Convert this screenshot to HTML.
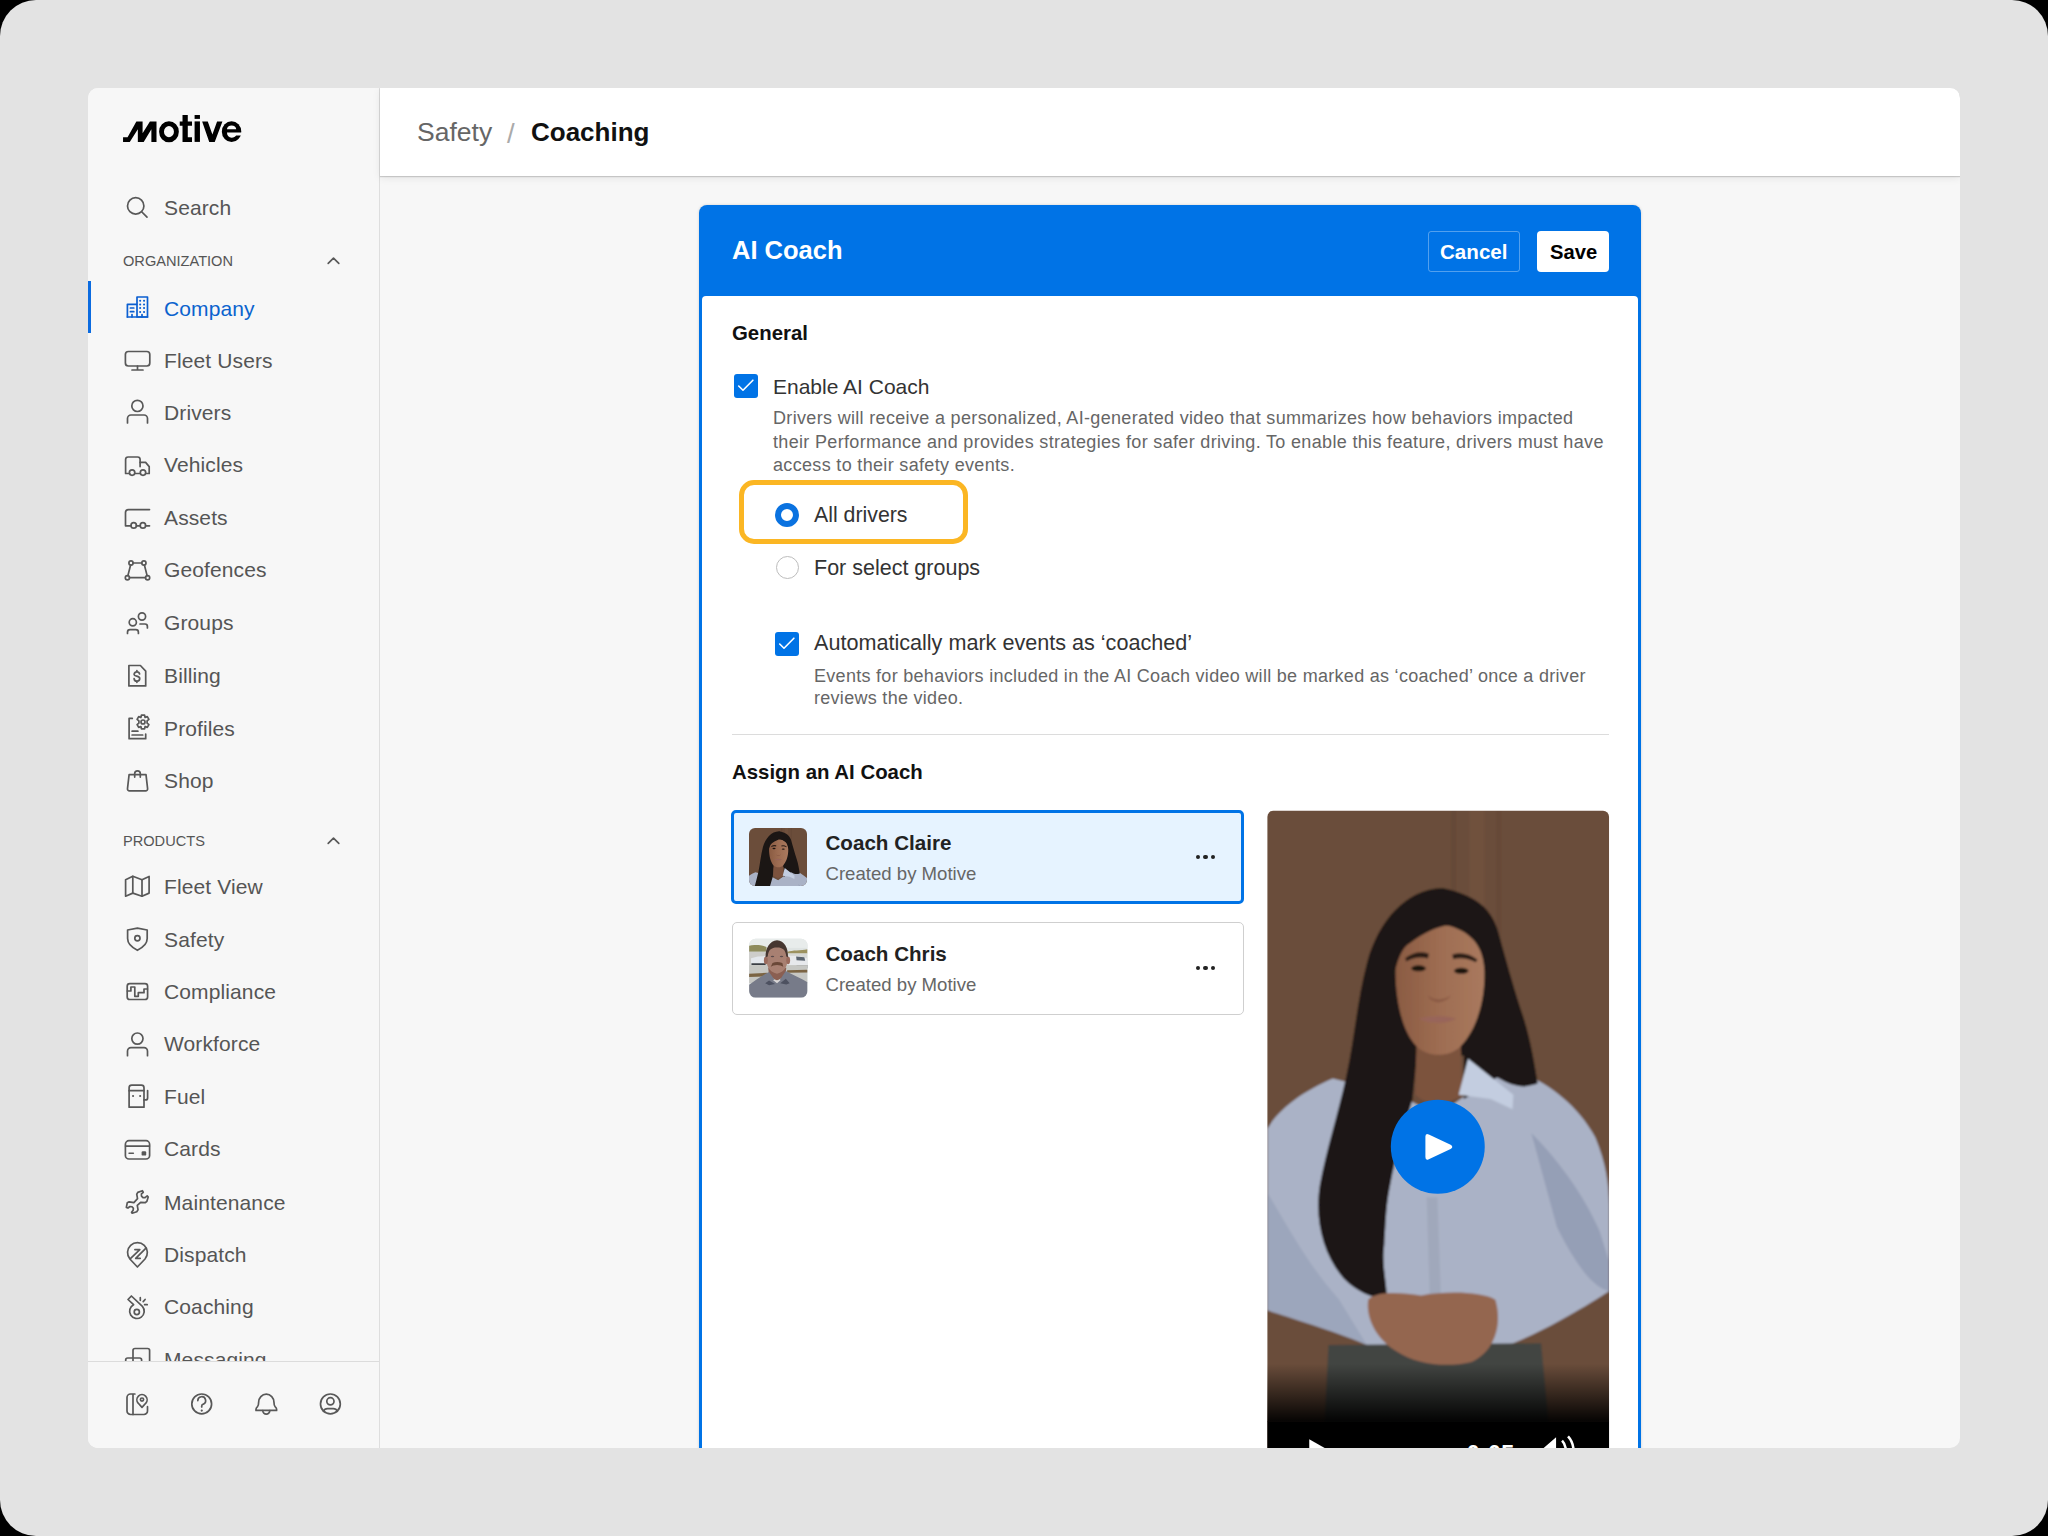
<!DOCTYPE html>
<html><head><meta charset="utf-8">
<style>
*{box-sizing:border-box;margin:0;padding:0}
html,body{width:2048px;height:1536px;overflow:hidden;background:#000;font-family:"Liberation Sans",sans-serif}
.abs{position:absolute;white-space:nowrap}
#frame{position:absolute;left:0;top:0;width:2048px;height:1536px;background:#e3e3e3;border-radius:36px;overflow:hidden}
#win{position:absolute;left:0;top:0;width:2048px;height:1536px;clip-path:inset(88px 88px 88px 88px round 10px);background:#f7f7f7}
</style></head><body>
<div id="frame"><div id="win">

<div class="abs" style="left:88px;top:88px;width:291px;height:1360px;background:#f7f7f7"></div>
<div class="abs" style="left:379px;top:88px;width:1px;height:1360px;background:#dedede"></div>
<svg class="abs" style="left:110px;top:100px" width="150" height="60" viewBox="0 0 2048 819">
<g fill="#000">
<path d="M178 510 L240 510 L360 292 L445 292 L445 455 L545 292 L635 292 L635 572 L565 572 L565 400 L460 572 L380 572 L380 400 L270 572 L178 572 Z"/>
<path fill-rule="evenodd" d="M805 290 A135 143 0 1 1 805 576 A135 143 0 1 1 805 290 Z M805 356 A68 76 0 1 0 805 508 A68 76 0 1 0 805 356 Z"/>
<path d="M990 205 H1062 V292 H1120 V352 H1062 V510 H1120 V572 H990 V352 H952 V292 H990 Z"/>
<rect x="1155" y="205" width="73" height="53"/>
<rect x="1155" y="292" width="73" height="280"/>
<path d="M1258 292 L1335 292 L1398 470 L1462 292 L1535 292 L1430 572 L1355 572 Z"/>
<ellipse cx="1660" cy="432" rx="133" ry="143"/><path fill="#f7f7f7" d="M1597 400 A63 52 0 0 1 1723 400 Z"/><path fill="#f7f7f7" d="M1597 445 C1597 490 1625 515 1660 515 C1690 515 1712 500 1722 485 H1810 V445 Z"/>
</g>
</svg>

<div class="abs" style="left:164px;top:196.00px;font-size:21px;line-height:23.46px;color:#555;font-weight:normal;letter-spacing:0.12px;">Search</div>
<div class="abs" style="left:164px;top:296.50px;font-size:21px;line-height:23.46px;color:#0b63ce;font-weight:normal;letter-spacing:0.12px;">Company</div>
<div class="abs" style="left:164px;top:349.00px;font-size:21px;line-height:23.46px;color:#555;font-weight:normal;letter-spacing:0.12px;">Fleet Users</div>
<div class="abs" style="left:164px;top:401.00px;font-size:21px;line-height:23.46px;color:#555;font-weight:normal;letter-spacing:0.12px;">Drivers</div>
<div class="abs" style="left:164px;top:453.19px;font-size:21px;line-height:23.46px;color:#555;font-weight:normal;letter-spacing:0.12px;">Vehicles</div>
<div class="abs" style="left:164px;top:505.50px;font-size:21px;line-height:23.46px;color:#555;font-weight:normal;letter-spacing:0.12px;">Assets</div>
<div class="abs" style="left:164px;top:558.29px;font-size:21px;line-height:23.46px;color:#555;font-weight:normal;letter-spacing:0.12px;">Geofences</div>
<div class="abs" style="left:164px;top:611.00px;font-size:21px;line-height:23.46px;color:#555;font-weight:normal;letter-spacing:0.12px;">Groups</div>
<div class="abs" style="left:164px;top:664.39px;font-size:21px;line-height:23.46px;color:#555;font-weight:normal;letter-spacing:0.12px;">Billing</div>
<div class="abs" style="left:164px;top:716.70px;font-size:21px;line-height:23.46px;color:#555;font-weight:normal;letter-spacing:0.12px;">Profiles</div>
<div class="abs" style="left:164px;top:769.39px;font-size:21px;line-height:23.46px;color:#555;font-weight:normal;letter-spacing:0.12px;">Shop</div>
<div class="abs" style="left:164px;top:875.00px;font-size:21px;line-height:23.46px;color:#555;font-weight:normal;letter-spacing:0.12px;">Fleet View</div>
<div class="abs" style="left:164px;top:927.50px;font-size:21px;line-height:23.46px;color:#555;font-weight:normal;letter-spacing:0.12px;">Safety</div>
<div class="abs" style="left:164px;top:979.60px;font-size:21px;line-height:23.46px;color:#555;font-weight:normal;letter-spacing:0.12px;">Compliance</div>
<div class="abs" style="left:164px;top:1032.39px;font-size:21px;line-height:23.46px;color:#555;font-weight:normal;letter-spacing:0.12px;">Workforce</div>
<div class="abs" style="left:164px;top:1084.99px;font-size:21px;line-height:23.46px;color:#555;font-weight:normal;letter-spacing:0.12px;">Fuel</div>
<div class="abs" style="left:164px;top:1136.99px;font-size:21px;line-height:23.46px;color:#555;font-weight:normal;letter-spacing:0.12px;">Cards</div>
<div class="abs" style="left:164px;top:1190.99px;font-size:21px;line-height:23.46px;color:#555;font-weight:normal;letter-spacing:0.12px;">Maintenance</div>
<div class="abs" style="left:164px;top:1243.19px;font-size:21px;line-height:23.46px;color:#555;font-weight:normal;letter-spacing:0.12px;">Dispatch</div>
<div class="abs" style="left:164px;top:1295.49px;font-size:21px;line-height:23.46px;color:#555;font-weight:normal;letter-spacing:0.12px;">Coaching</div>
<div class="abs" style="left:164px;top:1347.99px;font-size:21px;line-height:23.46px;color:#555;font-weight:normal;letter-spacing:0.12px;">Messaging</div>
<div class="abs" style="left:123px;top:253.29px;font-size:14.6px;line-height:16.31px;color:#555;font-weight:normal;letter-spacing:0px;">ORGANIZATION</div>
<div class="abs" style="left:123px;top:832.79px;font-size:14.6px;line-height:16.31px;color:#555;font-weight:normal;letter-spacing:0px;">PRODUCTS</div>
<div class="abs" style="left:88px;top:281px;width:3px;height:52px;background:#0b6be0"></div>
<svg class="abs" style="left:0;top:0" width="400" height="1536" viewBox="0 0 400 1536" fill="none" stroke="#585858" stroke-width="1.7" stroke-linecap="round" stroke-linejoin="round">
<!-- search -->
<circle cx="135.7" cy="205.9" r="8.2"/>
<path d="M141.9 212 L147 217.2"/>
<!-- chevrons -->
<path d="M328.2 263.4 L333.5 258.2 L338.8 263.4"/>
<path d="M328.2 843.4 L333.5 838.2 L338.8 843.4"/>
<!-- company (blue) -->
<g stroke="#0b5fd1">
<path d="M137 317 V297 H147.5 V317 Z"/>
<path d="M127.4 317 V304.3 H136.5"/>
<path d="M127.4 317 H147.5"/>
<path d="M130.4 308 H133.8 M130.4 311.7 H133.8"/>
<path d="M140.1 300.7 h0.1 M144 300.7 h0.1 M140.1 304.5 h0.1 M144 304.5 h0.1 M140.1 308.1 h0.1 M144 308.1 h0.1 M140.1 311.9 h0.1 M144 311.9 h0.1" stroke-width="2"/>
<path d="M132 314.6 V317 M142 314.6 V317"/>
</g>
<!-- fleet users monitor -->
<rect x="125.4" y="351.5" width="24.4" height="14.5" rx="3"/>
<path d="M137.5 366.2 V370 M132 370 H143"/>
<!-- drivers -->
<circle cx="137.4" cy="405.9" r="5.6"/>
<path d="M127.5 423 V418.5 a3.5 3.5 0 0 1 3.5 -3.5 H144 a3.5 3.5 0 0 1 3.5 3.5 V423"/>
<!-- vehicles -->
<path d="M129.6 473.5 H125.6 V459.5 a2.5 2.5 0 0 1 2.5 -2.5 H137.6 a2.5 2.5 0 0 1 2.5 2.5 V466.6"/>
<path d="M140.1 462.4 H145.6 L149.2 466.6 V473.5 H145.7"/>
<path d="M134.8 473.5 H140.3"/>
<circle cx="132.1" cy="472.6" r="2.7"/>
<circle cx="143" cy="472.6" r="2.7"/>
<!-- assets -->
<path d="M149.5 509.6 H128.5 a3 3 0 0 0 -3 3 V525.8 H131"/>
<path d="M136.4 525.8 H140.3 M145.6 525.8 H149.5"/>
<circle cx="133.7" cy="525.4" r="2.7"/>
<circle cx="142.9" cy="525.4" r="2.7"/>
<!-- geofences -->
<circle cx="131" cy="563" r="2.1"/>
<circle cx="143.9" cy="563" r="2.1"/>
<circle cx="127.4" cy="577.7" r="2.1"/>
<circle cx="147.6" cy="577.7" r="2.1"/>
<path d="M133.1 563 H141.8 M129.5 577.7 H145.5 M130.6 565 L127.9 575.6 M144.4 565 L147.1 575.6"/>
<!-- groups -->
<circle cx="132.8" cy="622.3" r="3.6"/>
<circle cx="142" cy="616.5" r="3.6"/>
<path d="M127.5 633.5 V632.2 a2.5 2.5 0 0 1 2.5 -2.5 H135.9 a2.5 2.5 0 0 1 2.5 2.5 V633.5"/>
<path d="M140 624 H145 a2.4 2.4 0 0 1 2.4 2.4 V628"/>
<!-- billing -->
<path d="M128.9 665.5 H140.4 L145.7 671.1 V685.9 H128.9 Z"/>
<path d="M139.6 674 a2.8 2.8 0 0 0 -5.5 0.4 c0 2 5.6 1.4 5.6 3.8 a2.8 2.8 0 0 1 -5.6 0.4 M136.9 670.6 V671.5 M136.9 681.4 V682.3"/>
<!-- profiles -->
<path d="M132.3 718.4 H129.1 V738.7 H145.7 V734"/>
<path d="M132.1 731.2 H137.9 M132.1 735 H142.7"/>
<path d="M141.4 715.2 H144.6 L145.1 717.5 L147.3 716.6 L148.9 719.4 L147.1 720.9 V723.1 L148.9 724.6 L147.3 727.4 L145.1 726.5 L144.6 728.8 H141.4 L140.9 726.5 L138.7 727.4 L137.1 724.6 L138.9 723.1 V720.9 L137.1 719.4 L138.7 716.6 L140.9 717.5 Z"/>
<circle cx="143" cy="722" r="2"/>
<!-- shop -->
<path d="M129.1 774.7 H146 L147.6 788.6 a2 2 0 0 1 -2 2.3 H129.5 a2 2 0 0 1 -2 -2.3 Z"/>
<path d="M134.7 777.1 V773.6 a2.8 2.8 0 0 1 5.6 0 V777.1"/>
<!-- fleet view -->
<path d="M125.6 879.8 L132.8 876.3 L142 879.8 L149.1 876.4 V893.1 L142 896.2 L132.8 893.1 L125.6 896.2 Z"/>
<path d="M132.8 876.3 V893.1 M142 879.8 V896.2"/>
<!-- safety -->
<path d="M137.4 928.2 L127.6 930 V938.6 C127.6 943.6 131.5 947.4 137.4 950.3 C143.3 947.4 147.2 943.6 147.2 938.6 V930 Z"/>
<circle cx="137.4" cy="938.3" r="2.6"/>
<!-- compliance -->
<rect x="127.2" y="983.6" width="20.4" height="15.9" rx="2.6"/>
<path d="M127.4 991 H130.9 V987 H134.8 V996.3 H138.3 V992.7 H144 V989 H147.4"/>
<!-- workforce -->
<circle cx="137.4" cy="1038.6" r="5.6"/>
<path d="M127.5 1055.7 V1051.2 a3.5 3.5 0 0 1 3.5 -3.5 H144 a3.5 3.5 0 0 1 3.5 3.5 V1055.7"/>
<!-- fuel -->
<path d="M129.1 1107.2 V1087.8 a2.6 2.6 0 0 1 2.6 -2.6 H141.4 a2.6 2.6 0 0 1 2.6 2.6 V1107.2 Z"/>
<path d="M129.1 1090.7 H144"/>
<path d="M133 1096 h0.1 M140.1 1096 h0.1" stroke-width="2"/>
<path d="M144 1099.9 H145.6 a2 2 0 0 0 2 -2 V1090.5"/>
<!-- cards -->
<rect x="125.4" y="1140.7" width="24.2" height="18.3" rx="3.6"/>
<path d="M125.6 1146.1 H149.4"/>
<path d="M129 1153.3 H133.4" stroke-width="1.4"/>
<rect x="141.6" y="1151.2" width="4.6" height="4.4" rx="1.2" fill="#585858" stroke="none"/>
<!-- maintenance -->
<path transform="translate(118 1182) scale(0.02604)" stroke-width="65" d="M935 335 L760 400 L720 470 L750 640 L610 790 L430 760 L355 800 L320 980 L380 1000 L460 940 L540 950 L590 1010 L580 1090 L520 1160 L545 1200 L720 1140 L770 1070 L740 900 L870 780 L1050 790 L1110 740 L1160 580 L1120 530 L1040 600 L960 600 L900 540 L900 460 L970 395 Z"/>
<!-- dispatch -->
<path d="M129.9 1259 A9.9 9.9 0 1 1 145 1259 L137.4 1267 Z"/>
<path d="M134.9 1249.6 H139.8 L130.4 1258.6 M146 1248.2 L135.7 1258.3 H140.2"/>
<!-- coaching -->
<path d="M133.6 1304.7 L128 1299.5 L131.4 1296 L142.4 1306.4 A7.3 7.3 0 1 1 133.6 1304.7 Z"/>
<circle cx="136.8" cy="1312" r="2.6"/>
<path d="M140.3 1297.7 V1300.3 M143.2 1301.6 L145.1 1299.5 M144.6 1304.7 H147.2"/>
<!-- messaging (clipped) -->
<path d="M133 1365 V1350.5 a2 2 0 0 1 2 -2 H147.6 a2 2 0 0 1 2 2 V1365"/>
<path d="M125.7 1365 V1360 a2 2 0 0 1 2 -2 H139.6 a2 2 0 0 1 2 2 V1365"/>
</svg>

<div class="abs" style="left:88px;top:1361px;width:291px;height:87px;background:#f7f7f7;border-top:1px solid #dcdcdc"></div>
<svg class="abs" style="left:0;top:1370px" width="400" height="70" viewBox="0 1370 400 70" fill="none" stroke="#585858" stroke-width="1.7" stroke-linecap="round" stroke-linejoin="round">
<path d="M134.9 1394 H130.5 a3.5 3.5 0 0 0 -3.5 3.5 V1411 a3.5 3.5 0 0 0 3.5 3.5 H144 a3.5 3.5 0 0 0 3.5 -3.5 V1406.7"/>
<path d="M133 1394.5 V1414.5"/>
<path d="M138.3 1403.3 A5.1 5.1 0 1 1 145.7 1403.3 L142 1407.4 Z"/>
<circle cx="142" cy="1399.6" r="1.6"/>
<circle cx="201.7" cy="1403.9" r="9.9"/>
<path d="M197.8 1400.6 a3.9 3.9 0 1 1 5.5 3.6 a2 2 0 0 0 -1.6 1.9 V1407"/>
<path d="M201.7 1410.6 h0.1" stroke-width="2.1"/>
<path d="M256 1410.4 V1409.2 Q256 1408 257.5 1406.6 Q258.6 1405.5 258.6 1402.5 A7.7 8.3 0 0 1 274 1402.5 Q274 1405.5 275.1 1406.6 Q276.6 1408 276.6 1409.2 V1410.4 Z"/>
<path d="M262.8 1410.6 a3.5 3.5 0 0 0 7 0"/>
<circle cx="330.4" cy="1403.9" r="9.9"/>
<circle cx="330.4" cy="1401.3" r="3.6"/>
<path d="M323.4 1411.3 Q324.6 1408.6 327.5 1408.6 H333.3 Q336.2 1408.6 337.4 1411.3"/>
</svg>

<div class="abs" style="left:380px;top:88px;width:1580px;height:88px;background:#fff;box-shadow:0 1px 1px rgba(0,0,0,.16),0 2px 8px rgba(0,0,0,.08)"></div>
<div class="abs" style="left:417px;top:118.02px;font-size:26.5px;line-height:29.60px;color:#666;font-weight:normal;letter-spacing:0px;">Safety</div>
<div class="abs" style="left:507px;top:118.61px;font-size:27.5px;line-height:30.72px;color:#aaa;font-weight:normal;letter-spacing:0px;">/</div>
<div class="abs" style="left:531px;top:118.47px;font-size:26px;line-height:29.04px;color:#111;font-weight:bold;letter-spacing:0px;">Coaching</div>
<div class="abs" style="left:699px;top:205px;width:942px;height:1300px;background:#0073e6;border-radius:8px;box-shadow:0 0 3px rgba(0,0,0,.16)"></div>
<div class="abs" style="left:732px;top:235.92px;font-size:25.5px;line-height:28.48px;color:#fff;font-weight:bold;letter-spacing:0px;">AI Coach</div>
<div class="abs" style="left:1428px;top:231px;width:92px;height:41px;border:1px solid rgba(255,255,255,.32);border-radius:3px"></div>
<div class="abs" style="left:1440px;top:240.36px;font-size:20.6px;line-height:23.01px;color:#fff;font-weight:bold;letter-spacing:0px;">Cancel</div>
<div class="abs" style="left:1537px;top:231px;width:72px;height:41px;background:#fff;border-radius:4px"></div>
<div class="abs" style="left:1550px;top:240.72px;font-size:20.2px;line-height:22.56px;color:#000;font-weight:bold;letter-spacing:0px;">Save</div>
<div class="abs" style="left:702px;top:296px;width:936px;height:1200px;background:#fff;border-radius:4px 4px 0 0"></div>
<div class="abs" style="left:732px;top:322.04px;font-size:20.4px;line-height:22.79px;color:#111;font-weight:bold;letter-spacing:0px;">General</div>
<div class="abs" style="left:734px;top:374px;width:24px;height:24px;background:#0073e6;border-radius:3px"><svg width="24" height="24" viewBox="0 0 24 24" style="position:absolute;left:0;top:0"><path d="M4.7 12 L9 16.2 L18.9 6.2" fill="none" stroke="#fff" stroke-width="1.6" stroke-linecap="round" stroke-linejoin="round"/></svg></div>
<div class="abs" style="left:773px;top:375.00px;font-size:21px;line-height:23.46px;color:#333;font-weight:normal;letter-spacing:0px;">Enable AI Coach</div>
<div class="abs" style="left:773px;top:408.21px;font-size:18px;line-height:20.11px;color:#666;font-weight:normal;letter-spacing:0.33px;">Drivers will receive a personalized, AI-generated video that summarizes how behaviors impacted</div>
<div class="abs" style="left:773px;top:431.51px;font-size:18px;line-height:20.11px;color:#666;font-weight:normal;letter-spacing:0.33px;">their Performance and provides strategies for safer driving. To enable this feature, drivers must have</div>
<div class="abs" style="left:773px;top:454.51px;font-size:18px;line-height:20.11px;color:#666;font-weight:normal;letter-spacing:0.33px;">access to their safety events.</div>
<div class="abs" style="left:739px;top:480px;width:229px;height:64px;border:5px solid #fbb623;border-radius:15px"></div>
<div class="abs" style="left:775px;top:503px;width:24px;height:24px;border-radius:50%;border:6px solid #0a72e0;background:#fff"></div>
<div class="abs" style="left:814px;top:504.22px;font-size:21.3px;line-height:23.79px;color:#333;font-weight:normal;letter-spacing:0px;">All drivers</div>
<div class="abs" style="left:775.5px;top:556px;width:23px;height:23px;border-radius:50%;border:1.5px solid #bdbdbd;background:#fff"></div>
<div class="abs" style="left:814px;top:556.34px;font-size:21.5px;line-height:24.02px;color:#333;font-weight:normal;letter-spacing:0px;">For select groups</div>
<div class="abs" style="left:775px;top:632px;width:24px;height:24px;background:#0073e6;border-radius:3px"><svg width="24" height="24" viewBox="0 0 24 24" style="position:absolute;left:0;top:0"><path d="M4.7 12 L9 16.2 L18.9 6.2" fill="none" stroke="#fff" stroke-width="1.6" stroke-linecap="round" stroke-linejoin="round"/></svg></div>
<div class="abs" style="left:814px;top:631.05px;font-size:21.6px;line-height:24.13px;color:#333;font-weight:normal;letter-spacing:0px;">Automatically mark events as ‘coached’</div>
<div class="abs" style="left:814px;top:665.61px;font-size:18px;line-height:20.11px;color:#666;font-weight:normal;letter-spacing:0.29px;">Events for behaviors included in the AI Coach video will be marked as ‘coached’ once a driver</div>
<div class="abs" style="left:814px;top:688.41px;font-size:18px;line-height:20.11px;color:#666;font-weight:normal;letter-spacing:0.29px;">reviews the video.</div>
<div class="abs" style="left:732px;top:734px;width:877px;height:1px;background:#dcdcdc"></div>
<div class="abs" style="left:732px;top:761.14px;font-size:20.4px;line-height:22.79px;color:#111;font-weight:bold;letter-spacing:0px;">Assign an AI Coach</div>
<div class="abs" style="left:731px;top:810px;width:513px;height:94px;background:#e6f3ff;border:3px solid #0073e6;border-radius:5px"></div>
<div class="abs" style="left:731.5px;top:921.5px;width:512px;height:93px;background:#fff;border:1.5px solid #cfcfcf;border-radius:5px"></div>
<div class="abs" style="left:825.5px;top:831.36px;font-size:20.6px;line-height:23.01px;color:#222;font-weight:bold;letter-spacing:0px;">Coach Claire</div>
<div class="abs" style="left:825.5px;top:864.17px;font-size:18.6px;line-height:20.78px;color:#666;font-weight:normal;letter-spacing:0px;">Created by Motive</div>
<div class="abs" style="left:825.5px;top:942.36px;font-size:20.6px;line-height:23.01px;color:#222;font-weight:bold;letter-spacing:0px;">Coach Chris</div>
<div class="abs" style="left:825.5px;top:975.17px;font-size:18.6px;line-height:20.78px;color:#666;font-weight:normal;letter-spacing:0px;">Created by Motive</div>
<div class="abs" style="left:1195.8px;top:854.8px;width:4.4px;height:4.4px;border-radius:50%;background:#222"></div>
<div class="abs" style="left:1203.3px;top:854.8px;width:4.4px;height:4.4px;border-radius:50%;background:#222"></div>
<div class="abs" style="left:1210.8px;top:854.8px;width:4.4px;height:4.4px;border-radius:50%;background:#222"></div>
<div class="abs" style="left:1195.8px;top:965.8px;width:4.4px;height:4.4px;border-radius:50%;background:#222"></div>
<div class="abs" style="left:1203.3px;top:965.8px;width:4.4px;height:4.4px;border-radius:50%;background:#222"></div>
<div class="abs" style="left:1210.8px;top:965.8px;width:4.4px;height:4.4px;border-radius:50%;background:#222"></div>
<svg class="abs" style="left:1258px;top:800px" width="360" height="656" viewBox="0 0 843 1536"><defs><clipPath id="vclip"><rect x="22" y="25" width="800" height="1600" rx="14"/></clipPath><linearGradient id="skin" x1="0" y1="0" x2="1" y2="0"><stop offset="0" stop-color="#8a5b42"/><stop offset=".5" stop-color="#9e6d52"/><stop offset="1" stop-color="#a9795e"/></linearGradient><linearGradient id="vgrad" x1="0" y1="0" x2="0" y2="1"><stop offset="0" stop-color="#000" stop-opacity="0"/><stop offset="1" stop-color="#000" stop-opacity=".95"/></linearGradient><filter id="soft" x="-5%" y="-5%" width="110%" height="110%"><feGaussianBlur stdDeviation="2.2"/></filter><symbol id="claire" viewBox="0 0 843 1536">
<rect x="0" y="0" width="843" height="1536" fill="#6b4d3a"/>
<rect x="452" y="0" width="12" height="1536" fill="#5f4334" opacity=".5"/>
<rect x="495" y="0" width="35" height="1536" fill="#785742" opacity=".45"/>
<rect x="558" y="0" width="12" height="1536" fill="#5f4334" opacity=".4"/>
<path fill="#aab2c6" d="M22 770 C50 720 110 680 175 652 L330 690 L420 738 L500 682 L572 620 C660 650 740 700 790 790 C815 850 822 900 822 950 L822 1150 C760 1190 660 1250 575 1280 L255 1276 C170 1240 80 1215 22 1195 Z"/>
<path fill="#8793ab" opacity=".6" d="M640 780 C700 840 760 920 800 1010 L822 1080 L822 1150 C780 1140 740 1080 700 1000 Z"/>
<path fill="#8e9ab1" opacity=".5" d="M22 920 C60 980 110 1080 190 1170 L255 1276 C170 1240 80 1215 22 1195 Z"/>
<path fill="#959eb0" opacity=".5" d="M395 930 L420 930 L432 1260 L405 1260 Z"/>
<path fill="#1b1614" d="M432 206 C345 208 282 285 256 378 C232 466 226 560 206 650 C186 740 160 820 145 900 C132 980 150 1060 200 1120 C240 1160 280 1170 302 1164 C300 1120 290 1090 296 1040 C300 980 300 950 310 900 C322 830 345 760 362 700 L372 600 L482 598 L482 700 C520 680 540 660 560 650 C600 672 620 676 655 664 C648 620 638 560 622 510 C600 445 580 370 560 300 C545 260 520 225 432 206 Z"/>
<path fill="#7c523d" d="M372 540 L368 690 Q420 735 478 690 L474 540 Z"/>
<path fill="url(#skin)" d="M425 290 C485 300 528 330 530 400 C532 475 510 540 474 577 C450 602 398 604 372 577 C340 547 322 475 322 400 C322 330 365 300 425 290 Z"/>
<path fill="#c3cde0" d="M492 606 L598 690 L596 724 L545 700 L470 690 Z"/>
<path fill="#1b1614" d="M432 212 C380 225 330 275 318 340 L316 420 C325 380 335 345 357 334 C390 310 420 295 448 293 C480 300 500 315 514 334 C525 350 530 380 534 405 L530 330 C515 270 475 225 432 212 Z"/>
<path fill="#2a1c17" d="M345 370 Q372 350 400 360 L398 371 Q372 364 347 378 Z M455 362 Q485 352 514 374 L510 380 Q482 366 457 373 Z"/>
<ellipse cx="376" cy="394" rx="17" ry="7" fill="#1e1410"/>
<ellipse cx="476" cy="400" rx="17" ry="7" fill="#1e1410"/>
<path fill="#8a5a45" d="M398 458 Q422 476 452 458 Q442 472 422 474 Q402 472 398 458 Z"/>
<path fill="#98655a" d="M375 512 Q422 500 465 512 Q422 532 375 512 Z"/>
<path fill="#424542" d="M165 1276 L663 1272 L688 1536 L152 1536 Z"/>
<path fill="#946650" d="M258 1170 C275 1150 332 1152 382 1160 C442 1150 520 1150 556 1170 C574 1232 552 1292 500 1316 C440 1330 372 1322 326 1292 C276 1262 252 1212 258 1170 Z"/>
</symbol></defs><g clip-path="url(#vclip)"><g filter="url(#soft)">
<rect x="0" y="0" width="843" height="1536" fill="#6b4d3a"/>
<rect x="452" y="0" width="12" height="1536" fill="#5f4334" opacity=".5"/>
<rect x="495" y="0" width="35" height="1536" fill="#785742" opacity=".45"/>
<rect x="558" y="0" width="12" height="1536" fill="#5f4334" opacity=".4"/>
<path fill="#aab2c6" d="M22 770 C50 720 110 680 175 652 L330 690 L420 738 L500 682 L572 620 C660 650 740 700 790 790 C815 850 822 900 822 950 L822 1150 C760 1190 660 1250 575 1280 L255 1276 C170 1240 80 1215 22 1195 Z"/>
<path fill="#8793ab" opacity=".6" d="M640 780 C700 840 760 920 800 1010 L822 1080 L822 1150 C780 1140 740 1080 700 1000 Z"/>
<path fill="#8e9ab1" opacity=".5" d="M22 920 C60 980 110 1080 190 1170 L255 1276 C170 1240 80 1215 22 1195 Z"/>
<path fill="#959eb0" opacity=".5" d="M395 930 L420 930 L432 1260 L405 1260 Z"/>
<path fill="#1b1614" d="M432 206 C345 208 282 285 256 378 C232 466 226 560 206 650 C186 740 160 820 145 900 C132 980 150 1060 200 1120 C240 1160 280 1170 302 1164 C300 1120 290 1090 296 1040 C300 980 300 950 310 900 C322 830 345 760 362 700 L372 600 L482 598 L482 700 C520 680 540 660 560 650 C600 672 620 676 655 664 C648 620 638 560 622 510 C600 445 580 370 560 300 C545 260 520 225 432 206 Z"/>
<path fill="#7c523d" d="M372 540 L368 690 Q420 735 478 690 L474 540 Z"/>
<path fill="url(#skin)" d="M425 290 C485 300 528 330 530 400 C532 475 510 540 474 577 C450 602 398 604 372 577 C340 547 322 475 322 400 C322 330 365 300 425 290 Z"/>
<path fill="#c3cde0" d="M492 606 L598 690 L596 724 L545 700 L470 690 Z"/>
<path fill="#1b1614" d="M432 212 C380 225 330 275 318 340 L316 420 C325 380 335 345 357 334 C390 310 420 295 448 293 C480 300 500 315 514 334 C525 350 530 380 534 405 L530 330 C515 270 475 225 432 212 Z"/>
<path fill="#2a1c17" d="M345 370 Q372 350 400 360 L398 371 Q372 364 347 378 Z M455 362 Q485 352 514 374 L510 380 Q482 366 457 373 Z"/>
<ellipse cx="376" cy="394" rx="17" ry="7" fill="#1e1410"/>
<ellipse cx="476" cy="400" rx="17" ry="7" fill="#1e1410"/>
<path fill="#8a5a45" d="M398 458 Q422 476 452 458 Q442 472 422 474 Q402 472 398 458 Z"/>
<path fill="#98655a" d="M375 512 Q422 500 465 512 Q422 532 375 512 Z"/>
<path fill="#424542" d="M165 1276 L663 1272 L688 1536 L152 1536 Z"/>
<path fill="#946650" d="M258 1170 C275 1150 332 1152 382 1160 C442 1150 520 1150 556 1170 C574 1232 552 1292 500 1316 C440 1330 372 1322 326 1292 C276 1262 252 1212 258 1170 Z"/>
</g><rect x="0" y="1320" width="843" height="136" fill="url(#vgrad)"/><rect x="0" y="1455" width="843" height="100" fill="#000"/><path d="M120 1497 L168 1524 L120 1551 Z" fill="#fff"/><text x="488" y="1550" font-family="Liberation Sans" font-size="56" font-weight="bold" fill="#fff">0:05</text><path d="M612 1532 L652 1532 L698 1492 L698 1580 Z" fill="#fff"/><path d="M712 1500 Q722 1510 721 1530 M726 1490 Q740 1505 739 1530" stroke="#fff" stroke-width="6" fill="none"/></g><circle cx="421" cy="812" r="110" fill="#0073e6"/><path d="M392 788 Q392 779 400 783 L451 807 Q459 812 451 817 L400 841 Q392 845 392 836 Z" fill="#fff"/></svg>
<svg class="abs" style="left:749px;top:828px" width="58" height="58" viewBox="0 0 58 58"><defs><clipPath id="ac1"><rect width="58" height="58" rx="6"/></clipPath></defs><g clip-path="url(#ac1)"><svg x="0" y="0" width="58" height="58" viewBox="105 172 628 628" preserveAspectRatio="xMidYMid slice"><use href="#claire" width="843" height="1536"/></svg></g></svg>
<svg class="abs" style="left:745px;top:935px" width="66" height="66" viewBox="0 0 1536 1536">
<defs><clipPath id="ac2"><rect x="95" y="90" width="1360" height="1365" rx="150"/></clipPath></defs>
<g clip-path="url(#ac2)">
<rect x="0" y="0" width="1536" height="1536" fill="#dfe4e3"/>
<rect x="0" y="0" width="1536" height="300" fill="#e8eceb"/>
<path fill="#8e8b5c" d="M95 390 L95 250 C180 220 260 240 320 230 C400 240 450 260 500 280 L500 390 Z"/>
<path fill="#9c9260" d="M990 430 L990 390 C1100 350 1300 360 1455 330 L1455 430 Z"/>
<rect x="95" y="390" width="420" height="310" fill="#cdcdca"/>
<rect x="990" y="430" width="465" height="300" fill="#d6d8d6"/>
<path fill="#e3e7ec" d="M140 540 L300 500 L480 490 L480 700 L140 700 Z"/>
<path fill="#3b3f45" d="M150 660 L480 660 L480 700 L150 700 Z"/>
<path fill="#e7e9ec" d="M1000 480 L1250 490 L1455 540 L1455 760 L1000 740 Z"/>
<path fill="#5a6470" d="M1190 500 L1380 520 L1400 600 L1200 590 Z"/>
<path fill="#3a3c40" d="M1200 700 L1455 700 L1455 780 L1200 780 Z"/>
<rect x="95" y="700" width="1360" height="420" fill="#c6c7c3"/>
<path fill="#7b6443" d="M95 900 L520 880 L520 960 L95 980 Z"/>
<path fill="#7b6443" d="M980 820 L1455 810 L1455 870 L980 880 Z"/>
<path fill="#8a5f52" d="M540 760 L560 960 L745 1060 L940 960 L960 760 Z"/>
<path fill="#a88072" d="M745 230 C880 230 990 330 995 520 C1000 700 940 860 745 900 C550 860 490 700 495 520 C500 330 610 230 745 230 Z"/>
<ellipse cx="485" cy="590" rx="45" ry="90" fill="#9a6a5c"/>
<ellipse cx="1005" cy="590" rx="45" ry="90" fill="#9a6a5c"/>
<path fill="#463630" d="M480 520 C470 300 580 130 745 120 C920 130 1010 300 1000 520 L960 500 C950 350 880 290 745 290 C610 290 540 350 530 500 Z"/>
<path fill="#6a4838" d="M640 650 Q745 610 870 650 L890 740 Q840 700 745 700 Q650 700 600 740 Z"/>
<ellipse cx="640" cy="500" rx="40" ry="15" fill="#5b4a4c"/>
<ellipse cx="850" cy="500" rx="40" ry="15" fill="#5b4a4c"/>
<path fill="#777b89" d="M95 1160 C300 1010 440 920 560 860 L700 1060 L745 1080 L800 1060 L950 840 C1100 930 1300 1010 1455 1100 L1455 1536 L95 1536 Z"/>
<path fill="#d9d6d6" d="M650 1050 L745 1120 L830 1050 L800 1040 L745 1060 L690 1040 Z"/>
<path fill="#4d5160" d="M470 1120 L560 1060 L700 1140 L560 1170 Z M1040 1120 L950 1020 L820 1120 L960 1150 Z"/>
</g></svg>
</div></div></body></html>
